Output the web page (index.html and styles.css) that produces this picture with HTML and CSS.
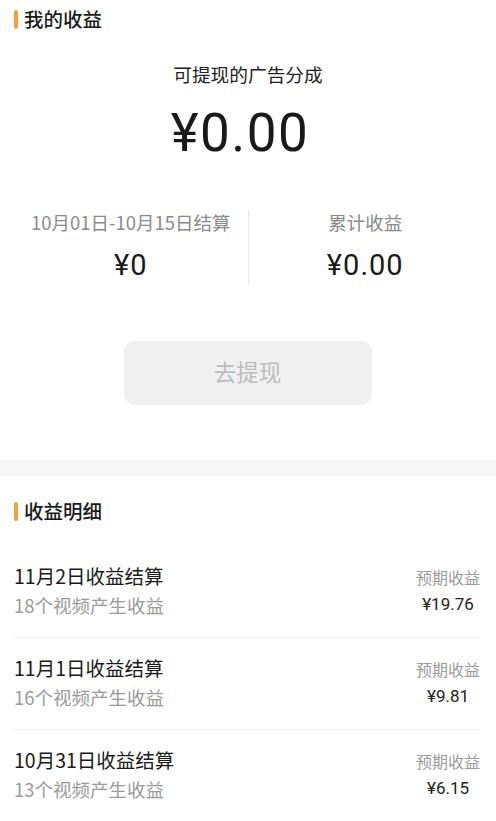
FILE: index.html
```html
<!DOCTYPE html>
<html lang="zh">
<head>
<meta charset="utf-8">
<link rel="stylesheet" href="styles.css">
</head>
<body>
<section class="card">
  <div class="sec-title"><span class="bar"></span>我的收益</div>
  <div class="sub">可提现的广告分成</div>
  <div class="big">¥0.00</div>
  <div class="stats">
    <div class="stat">
      <div class="stat-label">10月01日-10月15日结算</div>
      <div class="stat-value">¥0</div>
    </div>
    <div class="vline"></div>
    <div class="stat">
      <div class="stat-label">累计收益</div>
      <div class="stat-value">¥0.00</div>
    </div>
  </div>
  <div class="btn-wrap"><button class="btn">去提现</button></div>
</section>
<div class="gap"></div>
<section class="card2">
  <div class="sec-title"><span class="bar"></span>收益明细</div>
  <ul class="list">
    <li class="item">
      <div class="left">
        <div class="item-title">11月2日收益结算</div>
        <div class="item-sub">18个视频产生收益</div>
      </div>
      <div class="right">
        <div class="r-label">预期收益</div>
        <div class="r-value">¥19.76</div>
      </div>
    </li>
    <li class="item">
      <div class="left">
        <div class="item-title">11月1日收益结算</div>
        <div class="item-sub">16个视频产生收益</div>
      </div>
      <div class="right">
        <div class="r-label">预期收益</div>
        <div class="r-value">¥9.81</div>
      </div>
    </li>
    <li class="item">
      <div class="left">
        <div class="item-title">10月31日收益结算</div>
        <div class="item-sub">13个视频产生收益</div>
      </div>
      <div class="right">
        <div class="r-label">预期收益</div>
        <div class="r-value">¥6.15</div>
      </div>
    </li>
  </ul>
</section>
</body>
</html>
```

FILE: styles.css
```css
* { box-sizing: border-box; }
html, body { margin: 0; padding: 0; background: #fff; }
body {
  width: 496px;
  font-family: "Noto Sans CJK SC", "Noto Sans", Roboto, sans-serif;
  color: #222;
  overflow: hidden;
}
.card { padding: 7px 0 55px; }
.sec-title {
  display: flex;
  align-items: center;
  padding-left: 14px;
  font-size: 19.5px;
  line-height: 24px;
  height: 24px;
  color: #1a1a1a;
  font-weight: 500;
}
.bar {
  width: 4px;
  height: 19px;
  border-radius: 2px;
  background: #f4a23c;
  margin-right: 6px;
}
.sub {
  margin-top: 31px;
  text-align: center;
  font-size: 18.7px;
  line-height: 24px;
  color: #222;
}
.big {
  margin-top: 17px;
  text-align: center;
  font-family: Roboto, "Noto Sans CJK SC", sans-serif;
  font-size: 53px;
  line-height: 60px;
  letter-spacing: 1.5px;
  color: #1a1a1a;
  padding-right: 16px;
}
.stats {
  margin-top: 47px;
  display: flex;
  align-items: stretch;
  padding: 0 14px;
}
.stat { flex: 1; text-align: center; padding-bottom: 3px; }
.stat-label { font-size: 18.5px; line-height: 24px; color: #8a8a8a; }
.stat-value {
  margin-top: 14px;
  font-family: Roboto, "Noto Sans CJK SC", sans-serif;
  font-size: 29px;
  line-height: 34px;
  letter-spacing: 1px;
  color: #1a1a1a;
}
.vline { width: 1px; background: #e8e8e8; }
.btn-wrap { margin-top: 56px; display: flex; justify-content: center; }
.btn {
  width: 248px;
  height: 64px;
  border: none;
  border-radius: 11px;
  background: #f0f0f0;
  color: #bcbcbc;
  font-family: "Noto Sans CJK SC", sans-serif;
  font-size: 22.5px;
  line-height: 30px;
  padding: 0 0 5px;
  margin-left: -1px;
}
.gap { height: 16px; background: #f6f6f6; }
.card2 { padding-top: 23px; }
.list { list-style: none; margin: 23px 0 0; padding: 0 16px 0 14px; }
.item {
  display: flex;
  justify-content: space-between;
  align-items: flex-start;
  padding: 18px 0 20px;
  border-bottom: 1px solid #eeeeee;
}
.item-title { font-size: 19.5px; line-height: 24px; color: #1a1a1a; }
.item-sub { margin-top: 5px; font-size: 18.5px; line-height: 24px; color: #9a9a9a; }
.right { text-align: center; }
.r-label { font-size: 16px; line-height: 24px; color: #9a9a9a; padding-top: 1px; }
.r-value {
  margin-top: 3px;
  font-family: Roboto, "Noto Sans CJK SC", sans-serif;
  font-size: 17px;
  line-height: 24px;
  color: #222;
}
```
